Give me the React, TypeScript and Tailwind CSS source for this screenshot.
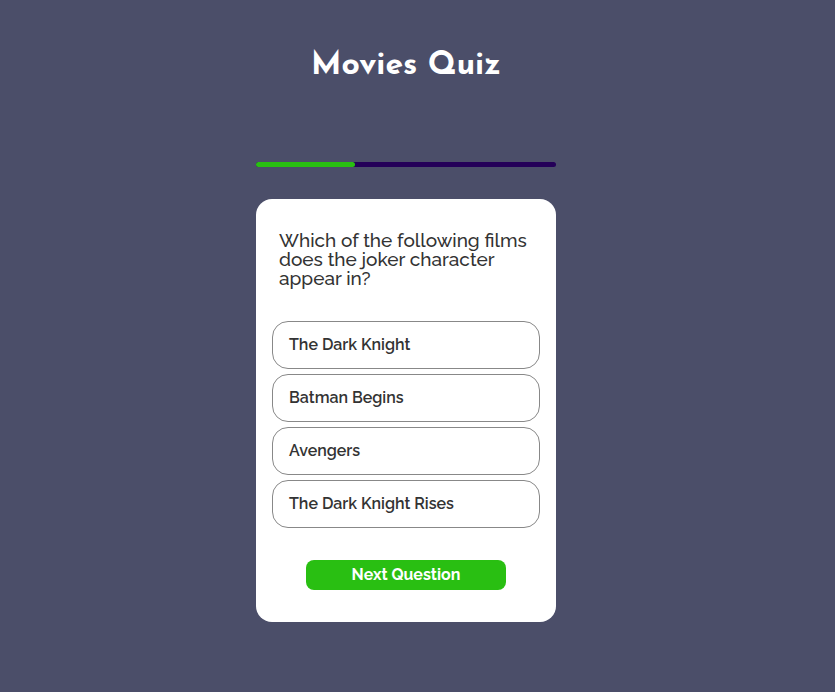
import { useState } from "react";

const question = "Which of the following films does the joker character appear in?";
const answers = ["The Dark Knight", "Batman Begins", "Avengers", "The Dark Knight Rises"];

export default function App() {
  const [selected, setSelected] = useState<string | null>(null);

  return (
    <div className="flex min-h-screen flex-col items-center bg-[#4b4e69] pr-[23px] pb-[70px] font-[Raleway,Lato,sans-serif] text-[#333333]">
      <h1 className="mt-12 font-[Josefin_Sans,Lato,sans-serif] text-[32px] leading-9 font-bold text-white">
        Movies Quiz
      </h1>

      <main className="mt-[78px] w-full max-w-[300px]">
        <div
          role="progressbar"
          aria-label="Quiz progress"
          aria-valuenow={33}
          className="h-[5px] w-full rounded-full bg-[#240058]"
        >
          <div className="h-full w-[33%] rounded-full bg-[#29bf12]" />
        </div>

        <section className="mt-8 rounded-2xl bg-white px-4 py-8">
          <h2 className="px-[7px] text-[19px] leading-[19px] font-medium">{question}</h2>

          <div className="mt-[33px] flex flex-col gap-[5px]">
            {answers.map((answer) => (
              <button
                key={answer}
                type="button"
                aria-pressed={selected === answer}
                onClick={() => setSelected(answer)}
                className="h-12 rounded-2xl border border-[#888888] px-4 text-left text-base leading-5 font-semibold aria-pressed:bg-gray-100"
              >
                {answer}
              </button>
            ))}
          </div>

          <button
            type="button"
            className="mx-auto mt-8 block h-[30px] w-[200px] rounded-lg bg-[#29bf12] text-base leading-5 font-bold text-white"
          >
            Next Question
          </button>
        </section>
      </main>
    </div>
  );
}
